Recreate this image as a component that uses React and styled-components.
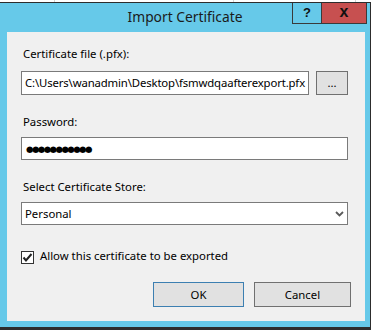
import React from 'react';
import styled, { createGlobalStyle } from 'styled-components';

const Global = createGlobalStyle`
  html, body { margin: 0; padding: 0; background: #ffffff; }
  body { font-family: "Noto Sans", "Liberation Sans", sans-serif; }
  * { box-sizing: border-box; }
`;

const Screen = styled.div`
  width: 373px;
  height: 330px;
  overflow: hidden;
  background: #ffffff;
  display: flex;
  flex-direction: column;
`;

const Behind = styled.div`
  height: 2px;
  flex: none;
  display: flex;
`;

const BehindCell = styled.div`
  width: ${p => p.$w}px;
  flex: none;
  border-right: 1px solid #d4d4d4;
`;

const Window = styled.div`
  width: 371px;
  flex: 1;
  background: #66c9e9;
  border-top: 1px solid #2d2d2d;
  border-right: 1px solid #2d2d2d;
  border-bottom: 3px solid #2d2d2d;
  display: flex;
  flex-direction: column;
`;

const TitleBar = styled.div`
  height: 29px;
  flex: none;
  display: grid;
  grid-template-columns: 1fr auto 1fr;
  align-items: start;
`;

const Title = styled.div`
  grid-column: 2;
  padding-top: 4px;
  font-size: 13.8px;
  line-height: 20px;
  color: #1b1b1b;
  white-space: nowrap;
`;

const Captions = styled.div`
  grid-column: 3;
  justify-self: end;
  display: flex;
  margin-right: 3px;
`;

const CaptionButton = styled.div`
  width: ${p => p.$w}px;
  height: 21px;
  background: ${p => p.$bg};
  border: 1px solid #3a3a3a;
  border-top: none;
  border-left: ${p => (p.$noLeft ? 'none' : '1px solid #3a3a3a')};
  display: flex;
  align-items: center;
  justify-content: center;
  font-family: "Liberation Sans", Arial, sans-serif;
  font-weight: bold;
  font-size: ${p => p.$fs}px;
  color: #111;
  line-height: 1;
  padding-bottom: 2px;
`;

const Client = styled.div`
  flex: 1;
  margin: 0 5px 6px 7px;
  background: #f0f0f0;
  padding: 14px 14px 0 14px;
  display: flex;
  flex-direction: column;
  font-size: 11.35px;
`;

const Label = styled.div`
  font-size: 11.35px;
  line-height: 16px;
  color: #000;
  padding-left: ${p => (p.$flush ? 0 : 2)}px;
  margin-top: ${p => p.$mt || 0}px;
  white-space: nowrap;
`;

const Row = styled.div`
  display: flex;
  gap: 7px;
  margin-top: ${p => p.$mt || 0}px;
  margin-right: 3px;
`;

const TextBox = styled.div`
  flex: 1;
  min-width: 0;
  height: ${p => p.$h}px;
  background: #fff;
  border: 1px solid #7a7a7a;
  padding: 0 1px 0 3px;
  display: flex;
  align-items: center;
  font-size: 11.35px;
  line-height: 16px;
  letter-spacing: ${p => (p.$tight ? '-0.14px' : 'normal')};
  color: #000;
  white-space: nowrap;
  overflow: hidden;
`;

const Dots = styled.span`
  font-family: "DejaVu Sans", sans-serif;
  font-size: 8.6px;
  letter-spacing: -1.6px;
  padding-left: 1px;
  padding-top: 1px;
`;

const Browse = styled.div`
  width: 32px;
  height: 24px;
  flex: none;
  background: #e1e1e1;
  border: 1px solid #707070;
  display: flex;
  align-items: center;
  justify-content: center;
  font-size: 11.35px;
  color: #000;
  padding-bottom: 2px;
`;

const Chevron = styled.svg`
  margin-left: auto;
  margin-right: 2px;
  flex: none;
`;

const CheckRow = styled.div`
  display: flex;
  align-items: center;
  gap: 6px;
  margin-top: 23px;
  height: 16px;
`;

const Box = styled.div`
  width: 13px;
  height: 13px;
  border: 1px solid #333;
  background: #fff;
  display: flex;
  align-items: center;
  justify-content: center;
  margin-top: 2px;
`;

const ButtonRow = styled.div`
  display: flex;
  justify-content: flex-end;
  gap: 10px;
  margin-top: 18px;
`;

const Button = styled.div`
  width: ${p => p.$w}px;
  height: 25px;
  background: #e1e1e1;
  border: 1px solid ${p => (p.$default ? '#3c7fb1' : '#707070')};
  display: flex;
  align-items: center;
  justify-content: center;
  font-size: 11.35px;
  color: #000;
`;

export default function App() {
  return (
    <>
      <Global />
      <Screen>
        <Behind>
          <BehindCell $w={55} />
          <BehindCell $w={179} />
          <BehindCell $w={122} />
        </Behind>
        <Window>
          <TitleBar>
            <Title>Import Certificate</Title>
            <Captions>
              <CaptionButton $w={30} $bg="#66c9e9" $fs={13}>?</CaptionButton>
              <CaptionButton $w={45} $bg="#c75050" $fs={16} $noLeft>x</CaptionButton>
            </Captions>
          </TitleBar>
          <Client>
            <Label>Certificate file (.pfx):</Label>
            <Row $mt={9}>
              <TextBox $h={24} $tight>C:\Users\wanadmin\Desktop\fsmwdqaafterexport.pfx</TextBox>
              <Browse>...</Browse>
            </Row>
            <Label $mt={19}>Password:</Label>
            <Row $mt={7}>
              <TextBox $h={23}><Dots>●●●●●●●●●●●</Dots></TextBox>
            </Row>
            <Label $mt={19}>Select Certificate Store:</Label>
            <Row $mt={7}>
              <TextBox $h={23}>
                Personal
                <Chevron width="9" height="6" viewBox="0 0 9 6">
                  <path d="M1 1 L4.5 4.5 L8 1" fill="none" stroke="#5a5a5a" strokeWidth="1.8" />
                </Chevron>
              </TextBox>
            </Row>
            <CheckRow>
              <Box>
                <svg width="11" height="11" viewBox="0 0 11 11">
                  <path d="M1.5 5.5 L4 8.5 L9.5 2" fill="none" stroke="#222" strokeWidth="2" />
                </svg>
              </Box>
              <Label $flush>Allow this certificate to be exported</Label>
            </CheckRow>
            <ButtonRow>
              <Button $w={91} $default>OK</Button>
              <Button $w={97}>Cancel</Button>
            </ButtonRow>
          </Client>
        </Window>
      </Screen>
    </>
  );
}
